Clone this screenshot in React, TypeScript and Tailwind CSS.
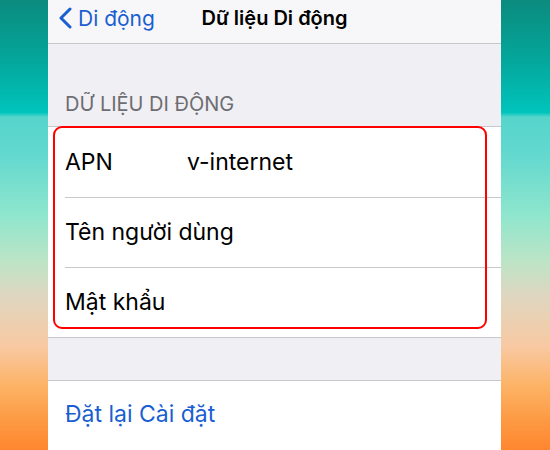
import React from "react";

const strip =
  "bg-[linear-gradient(to_bottom,#0b8b7e_0%,#04a89d_14%,#00c4bc_25%,#56d5cb_26%,#62d8cf_34%,#8fe6cd_48%,#bce4c6_58%,#e0d6c0_66%,#f8c9a2_77%,#fdb264_86%,#fd9b45_93%,#ff862f_100%)]";

export default function App() {
  return (
    <div
      className="w-[550px] h-[450px] flex overflow-hidden"
      style={{ fontFamily: "Inter, 'Noto Sans', sans-serif" }}
    >
      <div className={`w-[48px] h-full shrink-0 ${strip}`} />
      <div className="flex-1 h-full flex flex-col bg-[#efeff4] relative">
        {/* Nav bar */}
        <div className="h-[44px] shrink-0 bg-[#f7f7f9] border-b border-[#c8c7cc] grid grid-cols-[1fr_auto_1fr] items-center pb-[7px]">
          <div className="flex items-center pl-[9px] text-[#1a5fd1]">
            <svg width="16" height="22" viewBox="0 0 16 22" className="mr-[5px]">
              <path d="M13 2 L4 11 L13 20" fill="none" stroke="#1a5fd1" strokeWidth="3" strokeLinecap="round" strokeLinejoin="round" />
            </svg>
            <span className="text-[21px] leading-none">Di động</span>
          </div>
          <div className="text-[20px] font-semibold text-black leading-none">Dữ liệu Di động</div>
          <div />
        </div>
        {/* section header */}
        <div className="h-[82px] shrink-0 flex items-end pl-[17px] pb-[12px]">
          <span className="text-[20px] text-[#6d6d72] leading-none">DỮ LIỆU DI ĐỘNG</span>
        </div>
        {/* group */}
        <div className="relative bg-white border-y border-[#c8c7cc] shrink-0">
          <div className="h-[70px] flex items-center pl-[17px] text-[23px] text-black">
            <span className="w-[122px]">APN</span>
            <span>v-internet</span>
          </div>
          <div className="ml-[17px] h-px bg-[#c8c7cc]" />
          <div className="h-[69px] flex items-center pl-[17px] text-[23px] text-black">Tên người dùng</div>
          <div className="ml-[17px] h-px bg-[#c8c7cc]" />
          <div className="h-[69px] flex items-center pl-[17px] text-[23px] text-black">Mật khẩu</div>
          <div className="absolute left-[5px] top-[-1px] w-[434px] h-[203px] border-2 border-[#ff0000] rounded-[9px] pointer-events-none" />
        </div>
        <div className="h-[42px] shrink-0" />
        <div className="flex-1 bg-white border-t border-[#c8c7cc] pl-[17px] pt-[22px]">
          <span className="text-[23px] text-[#1a5fd1] leading-none">Đặt lại Cài đặt</span>
        </div>
      </div>
      <div className={`w-[49px] h-full shrink-0 ${strip}`} />
    </div>
  );
}
